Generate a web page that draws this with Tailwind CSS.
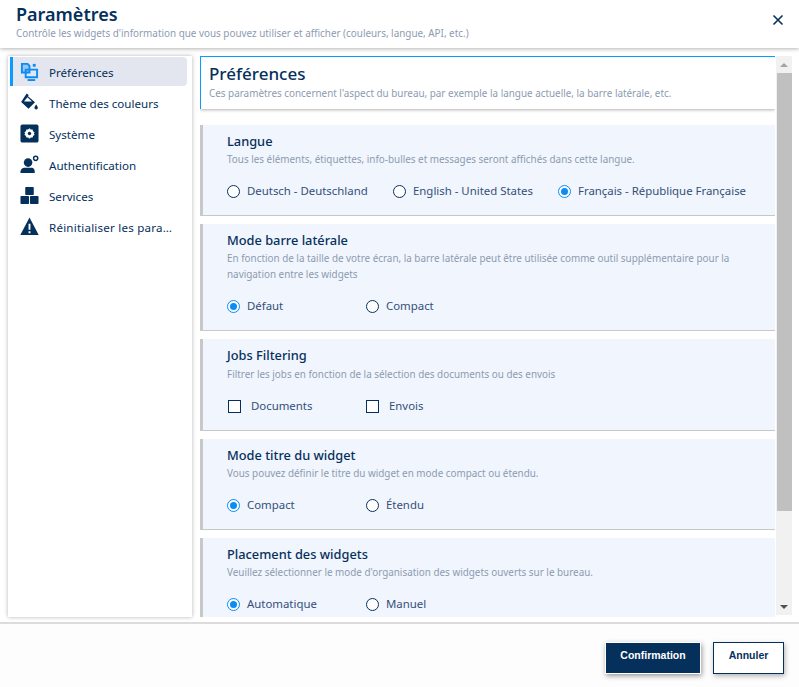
<!DOCTYPE html>
<html lang="fr">
<head>
    <meta charset="UTF-8">
    <title>Paramètres</title>
    <script src="https://cdn.jsdelivr.net/npm/@tailwindcss/browser@4"></script>
</head>
<body class="bg-white font-['Noto_Sans',sans-serif] text-[#06305c]">
<div class="flex flex-col h-[687px] w-[799px] overflow-hidden">
    <!-- Header -->
    <header class="h-[48px] shrink-0 flex justify-between pl-[16px] pr-[16px] bg-white shadow-[0_1px_4px_rgba(0,0,0,0.3)] relative z-10">
        <div>
            <h1 class="text-[18px] leading-[24px] pt-[2px] font-semibold">Paramètres</h1>
            <p class="text-[9.9px] leading-[14px] text-[#8c9bb0]">Contrôle les widgets d'information que vous pouvez utiliser et afficher (couleurs, langue, API, etc.)</p>
        </div>
        <button class="mt-[14px] w-[12px] h-[12px] mr-[-1px]">
            <svg viewBox="0 0 12 12" class="w-[12px] h-[12px]" fill="none" stroke="#06305c" stroke-width="1.6"><path d="M1.5 1.5l9 9M10.5 1.5l-9 9"/></svg>
        </button>
    </header>

    <div class="flex flex-1 min-h-0 pt-[8px] pl-[8px] pr-[7px] pb-[5px] gap-[8px] bg-white">
        <!-- Sidebar -->
        <aside class="w-[184px] shrink-0 h-[561px] bg-white shadow-[0_0_4px_rgba(0,0,0,0.3)] pl-[2px] pr-[5px] pt-[1px] text-[11.6px]">
            <a class="flex items-center h-[29px] mb-[2px] pt-[2px] bg-[#e3e6ef] rounded-r-[4px] border-l-[3px] border-[#0b9bff] pl-[7px] gap-[10px]">
                <svg viewBox="0 0 20 20" class="w-[19px] h-[19px] mt-[-2px]" fill="none" stroke="#0b8cf5" stroke-width="2"><path d="M2 2h6l2 2v7H2z" fill="#0b8cf5" fill-opacity=".35"/><path d="M6 8h12v8H6z"/><path d="M8 19h8"/><path d="M15 2v3" stroke-width="3"/></svg>
                <span>Préférences</span>
            </a>
            <a class="flex items-center h-[29px] mb-[2px] pt-[2px] pl-[10px] gap-[10px]">
                <svg viewBox="0 0 20 20" class="w-[19px] h-[19px] mt-[-2px]" fill="#06305c"><path d="M7 .5l2.200 1.700-.8 1.100L15.800 9.800 9 16.500 1.200 9.500z"/><path d="M7.800 4.600l4.800 4.400H4.200z" fill="#fff"/><path d="M17 12c1.200 1.800 1.800 2.600 1.800 3.500a1.800 1.800 0 0 1-3.600 0c0-.9.6-1.700 1.800-3.500z"/></svg>
                <span>Thème des couleurs</span>
            </a>
            <a class="flex items-center h-[29px] mb-[2px] pt-[2px] pl-[10px] gap-[10px]">
                <svg viewBox="0 0 20 20" class="w-[19px] h-[19px] mt-[-2px]"><rect x="0.500" y="0.500" width="19" height="19" rx="2" fill="#06305c"/><path d="M10 4.500l1.400 1.400 1.900-.2.400 1.800 1.700 1.100-.9 1.400.9 1.400-1.700 1.100-.4 1.800-1.900-.2L10 15.500l-1.400-1.400-1.900.2-.4-1.800-1.700-1.100.9-1.400-.9-1.400 1.700-1.100.4-1.800 1.900.2z" fill="#fff"/><circle cx="10" cy="10" r="1.800" fill="#06305c"/></svg>
                <span>Système</span>
            </a>
            <a class="flex items-center h-[29px] mb-[2px] pt-[2px] pl-[10px] gap-[10px]">
                <svg viewBox="0 0 20 20" class="w-[19px] h-[19px] mt-[-2px]" fill="#06305c"><circle cx="8.500" cy="8" r="4.500"/><path d="M0.500 19v-1.500c0-2.500 2.500-4 4-4h8c1.500 0 3 1.500 3 4V19z"/><circle cx="16.500" cy="3.500" r="2.200" fill="none" stroke="#06305c" stroke-width="1.500"/></svg>
                <span>Authentification</span>
            </a>
            <a class="flex items-center h-[29px] mb-[2px] pt-[2px] pl-[10px] gap-[10px]">
                <svg viewBox="0 0 20 20" class="w-[19px] h-[19px] mt-[-2px]" fill="#06305c"><rect x="5.500" y="1" width="9" height="8.500" rx=".8"/><rect x="0.500" y="10.500" width="9" height="8.500" rx=".8"/><rect x="10.500" y="10.500" width="9" height="8.500" rx=".8"/></svg>
                <span>Services</span>
            </a>
            <a class="flex items-center h-[29px] pt-[2px] pl-[10px] gap-[10px]">
                <svg viewBox="0 0 20 20" class="w-[19px] h-[19px] shrink-0 mt-[-2px]"><path d="M10 .5l9.700 18.500H.3z" fill="#06305c"/><path d="M9 7h2v6.500H9zM9 15h2v2H9z" fill="#fff"/></svg>
                <span class="tracking-[0.2px]">Réinitialiser les para…</span>
            </a>
        </aside>

        <!-- Content -->
        <main class="flex-1 min-w-0 h-[561px] flex gap-[1px]">
            <div class="w-[575px] shrink-0 overflow-hidden">
                <div class="h-[53px] mb-[16px] bg-white border-l border-t border-[#0b9bff] shadow-[0_1px_3px_rgba(0,0,0,0.3)] pl-[8px]">
                    <h2 class="text-[17px] leading-[24px] pt-[5px] font-medium">Préférences</h2>
                    <p class="text-[9.9px] leading-[14px] text-[#8c9bb0]">Ces paramètres concernent l'aspect du bureau, par exemple la langue actuelle, la barre latérale, etc.</p>
                </div>

                <section class="h-[91px] mb-[8px] bg-[#f1f5fd] border-l-[3px] border-b border-[#c8c8c8] pl-[24px] pt-[7px]">
                    <h3 class="text-[12.8px] leading-[18px] font-medium">Langue</h3>
                    <p class="text-[9.9px] leading-[15px] mt-[2px] text-[#8c9bb0]">Tous les éléments, étiquettes, info-bulles et messages seront affichés dans cette langue.</p>
                    <div class="flex mt-[16px] text-[11.4px] leading-[16px] text-[#33507a]">
                        <label class="w-[166px] flex items-center gap-[7px]"><span class="w-[13px] h-[13px] rounded-full border border-[#06305c] bg-white"></span>Deutsch - Deutschland</label>
                        <label class="w-[165px] flex items-center gap-[7px]"><span class="w-[13px] h-[13px] rounded-full border border-[#06305c] bg-white"></span>English - United States</label>
                        <label class="flex items-center gap-[7px]"><span class="w-[13px] h-[13px] rounded-full border border-[#0b8cf5] bg-white flex items-center justify-center"><span class="w-[7px] h-[7px] rounded-full bg-[#0b8cf5]"></span></span>Français - République Française</label>
                    </div>
                </section>

                <section class="h-[107px] mb-[8px] bg-[#f1f5fd] border-l-[3px] border-b border-[#c8c8c8] pl-[24px] pt-[7px]">
                    <h3 class="text-[12.8px] leading-[18px] font-medium">Mode barre latérale</h3>
                    <p class="text-[9.9px] leading-[16px] mt-[1px] text-[#8c9bb0] w-[530px]">En fonction de la taille de votre écran, la barre latérale peut être utilisée comme outil supplémentaire pour la navigation entre les widgets</p>
                    <div class="flex mt-[16px] text-[11.4px] leading-[16px] text-[#33507a]">
                        <label class="w-[139px] flex items-center gap-[7px]"><span class="w-[13px] h-[13px] rounded-full border border-[#0b8cf5] bg-white flex items-center justify-center"><span class="w-[7px] h-[7px] rounded-full bg-[#0b8cf5]"></span></span>Défaut</label>
                        <label class="flex items-center gap-[7px]"><span class="w-[13px] h-[13px] rounded-full border border-[#06305c] bg-white"></span>Compact</label>
                    </div>
                </section>

                <section class="h-[92px] mb-[8px] bg-[#f1f5fd] border-l-[3px] border-b border-[#c8c8c8] pl-[24px] pt-[7px]">
                    <h3 class="text-[12.8px] leading-[18px] font-medium">Jobs Filtering</h3>
                    <p class="text-[9.9px] leading-[15px] mt-[3px] text-[#8c9bb0]">Filtrer les jobs en fonction de la sélection des documents ou des envois</p>
                    <div class="flex mt-[16px] text-[11.4px] leading-[16px] text-[#33507a]">
                        <label class="w-[139px] flex items-center gap-[10px]"><span class="w-[13px] h-[13px] border border-[#06305c] bg-white ml-[1px]"></span>Documents</label>
                        <label class="flex items-center gap-[10px]"><span class="w-[13px] h-[13px] border border-[#06305c] bg-white"></span>Envois</label>
                    </div>
                </section>

                <section class="h-[91px] mb-[8px] bg-[#f1f5fd] border-l-[3px] border-b border-[#c8c8c8] pl-[24px] pt-[7px]">
                    <h3 class="text-[12.8px] leading-[18px] font-medium">Mode titre du widget</h3>
                    <p class="text-[9.9px] leading-[15px] mt-[2px] text-[#8c9bb0]">Vous pouvez définir le titre du widget en mode compact ou étendu.</p>
                    <div class="flex mt-[16px] text-[11.4px] leading-[16px] text-[#33507a]">
                        <label class="w-[139px] flex items-center gap-[7px]"><span class="w-[13px] h-[13px] rounded-full border border-[#0b8cf5] bg-white flex items-center justify-center"><span class="w-[7px] h-[7px] rounded-full bg-[#0b8cf5]"></span></span>Compact</label>
                        <label class="flex items-center gap-[7px]"><span class="w-[13px] h-[13px] rounded-full border border-[#06305c] bg-white"></span>Étendu</label>
                    </div>
                </section>

                <section class="h-[100px] bg-[#f1f5fd] border-l-[3px] border-[#c8c8c8] pl-[24px] pt-[7px]">
                    <h3 class="text-[12.8px] leading-[18px] font-medium">Placement des widgets</h3>
                    <p class="text-[9.9px] leading-[15px] mt-[2px] text-[#8c9bb0]">Veuillez sélectionner le mode d'organisation des widgets ouverts sur le bureau.</p>
                    <div class="flex mt-[16px] text-[11.4px] leading-[16px] text-[#33507a]">
                        <label class="w-[139px] flex items-center gap-[7px]"><span class="w-[13px] h-[13px] rounded-full border border-[#0b8cf5] bg-white flex items-center justify-center"><span class="w-[7px] h-[7px] rounded-full bg-[#0b8cf5]"></span></span>Automatique</label>
                        <label class="flex items-center gap-[7px]"><span class="w-[13px] h-[13px] rounded-full border border-[#06305c] bg-white"></span>Manuel</label>
                    </div>
                </section>
            </div>

            <!-- Scrollbar -->
            <div class="w-[16px] shrink-0 h-[559px] bg-[#f1f1f1] flex flex-col items-center">
                <div class="h-[17px] flex items-center justify-center"><span class="w-0 h-0 border-x-[4px] border-x-transparent border-b-[4px] border-b-[#a3a3a3]"></span></div>
                <div class="w-[15px] ml-[1px] h-[438px] bg-[#c0c0c0]"></div>
                <div class="flex-1"></div>
                <div class="h-[17px] flex items-center justify-center"><span class="w-0 h-0 border-x-[4px] border-x-transparent border-t-[4px] border-t-[#505050]"></span></div>
            </div>
        </main>
    </div>

    <!-- Footer -->
    <footer class="h-[65px] shrink-0 flex justify-end gap-[12px] pr-[15px] pt-[18px] bg-[#fdfdfd] border-t-[2px] border-[#dcdcdc] font-['Liberation_Sans',sans-serif] text-[10.5px] font-bold">
        <button class="w-[96px] h-[32px] pb-[5px] bg-[#06305c] text-white border border-white shadow-[1px_2px_5px_rgba(0,0,0,0.4)]">Confirmation</button>
        <button class="w-[71px] h-[32px] pb-[5px] bg-white text-[#06305c] border border-[#06305c] shadow-[1px_2px_5px_rgba(0,0,0,0.3)]">Annuler</button>
    </footer>
</div>
</body>
</html>
